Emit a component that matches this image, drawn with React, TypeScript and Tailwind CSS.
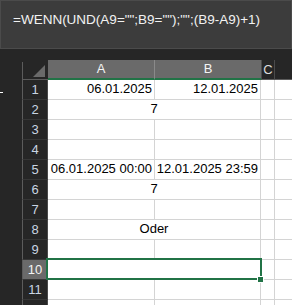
import React from "react";

type Row = {
  a?: string;
  b?: string;
  merged?: string;
  selected?: boolean;
};

const rows: Row[] = [
  { a: "06.01.2025", b: "12.01.2025" },
  { merged: "7" },
  {},
  {},
  { a: "06.01.2025 00:00", b: "12.01.2025 23:59" },
  { merged: "7" },
  {},
  { merged: "Oder" },
  {},
  { merged: "", selected: true },
  {},
];

const font = { fontFamily: '"Liberation Sans", Arial, sans-serif' };

function CellText({ children, align }: { children?: React.ReactNode; align: "right" | "center" }) {
  return (
    <div
      className={`h-full flex items-end pb-[3px] text-[13px] leading-[15px] text-black whitespace-nowrap ${
        align === "right" ? "justify-end pr-[2px]" : "justify-center"
      }`}
    >
      {children}
    </div>
  );
}

export default function App() {
  return (
    <div className="w-[292px] h-[305px] bg-[#262626] overflow-hidden" style={font}>
      {/* formula bar */}
      <div className="h-[49px] bg-[#3c3c3c] border border-[#4b4b4b] pl-[12px] pt-[11px]">
        <div className="text-[13.5px] leading-[15px] text-[#f2f2f2] whitespace-nowrap">
          =WENN(UND(A9="";B9="");"";(B9-A9)+1)
        </div>
      </div>

      <div className="h-[11px]" />

      {/* column headers */}
      <div className="flex h-[20px]">
        <div className="w-[22px] shrink-0" />
        <div className="w-[26px] shrink-0 relative border-l border-[#5c5c5c] border-b border-b-[#5c5c5c] mt-[2px]">
          <svg className="absolute right-[3px] bottom-[2px]" width="12" height="12" viewBox="0 0 12 12">
            <polygon points="12,0 12,12 0,12" fill="#6a6a6a" />
          </svg>
        </div>
        <div className="w-[107px] shrink-0 bg-[#6a6a6a] border-r border-[#8a8a8a] border-b-2 border-b-[#217346] flex items-center justify-center text-[13px] text-[#f4f4f4]">
          A
        </div>
        <div className="w-[106px] shrink-0 bg-[#6a6a6a] border-b-2 border-b-[#217346] flex items-center justify-center text-[13px] text-[#f4f4f4]">
          B
        </div>
        <div className="w-[14px] shrink-0 border-l border-r border-[#4a4a4a] border-b border-b-[#5c5c5c] flex items-center justify-center text-[13px] text-[#dcdcdc]">
          C
        </div>
        <div className="flex-1 border-b border-[#5c5c5c]" />
      </div>

      {/* rows */}
      {rows.map((r, i) => (
        <div key={i} className="flex h-[20px]">
          <div className="w-[22px] shrink-0 relative">
            {i === 0 && <div className="absolute left-0 top-[12px] w-[3px] h-[1px] bg-white" />}
          </div>
          <div
            className={`w-[26px] shrink-0 border-l border-[#5c5c5c] border-r border-r-[#4a4a4a] border-b border-b-[#363636] flex items-center justify-center text-[13px] ${
              r.selected ? "bg-[#6a6a6a] text-[#f4f4f4]" : "text-[#c9d5e3]"
            }`}
          >
            {i + 1}
          </div>
          {r.merged !== undefined ? (
            <div className="w-[213px] shrink-0 bg-white border-r border-b border-[#d4d4d4] relative">
              <CellText align="center">{r.merged}</CellText>
              {r.selected && (
                <>
                  <div className="absolute -left-[2px] -top-[2px] -right-[2px] -bottom-[1px] border-2 border-[#217346]" />
                  <div className="absolute -right-[4px] -bottom-[4px] w-[7px] h-[7px] bg-[#217346] border border-white" />
                </>
              )}
            </div>
          ) : (
            <>
              <div className="w-[107px] shrink-0 bg-white border-r border-b border-[#d4d4d4]">
                <CellText align="right">{r.a}</CellText>
              </div>
              <div className="w-[106px] shrink-0 bg-white border-r border-b border-[#d4d4d4]">
                <CellText align="right">{r.b}</CellText>
              </div>
            </>
          )}
          <div className="w-[14px] shrink-0 bg-white border-r border-b border-[#d4d4d4]" />
          <div className="flex-1 bg-white border-b border-[#d4d4d4]" />
        </div>
      ))}
      {/* partially visible row 12 */}
      <div className="flex h-[20px]">
        <div className="w-[22px] shrink-0" />
        <div className="w-[26px] shrink-0 border-l border-[#5c5c5c] border-r border-r-[#4a4a4a]" />
        <div className="w-[107px] shrink-0 bg-white border-r border-[#d4d4d4]" />
        <div className="w-[106px] shrink-0 bg-white border-r border-[#d4d4d4]" />
        <div className="w-[14px] shrink-0 bg-white border-r border-[#d4d4d4]" />
        <div className="flex-1 bg-white" />
      </div>
    </div>
  );
}
